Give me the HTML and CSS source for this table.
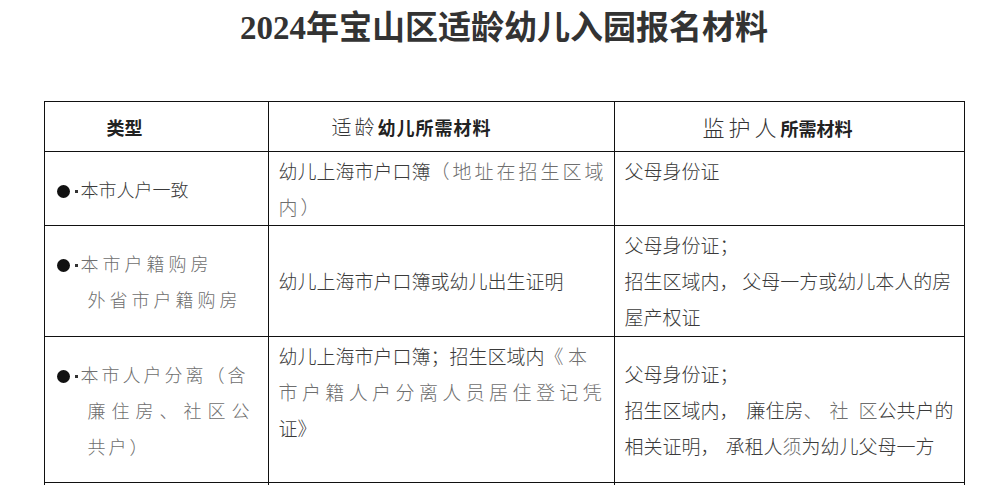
FILE: index.html
```html
<!DOCTYPE html>
<html lang="zh-CN">
<head>
<meta charset="utf-8">
<title>2024年宝山区适龄幼儿入园报名材料</title>
<link rel="stylesheet" href="styles.css">
</head>
<body>
<h1 class="title">2024年宝山区适龄幼儿入园报名材料</h1>
<table class="grid">
  <colgroup>
    <col class="c1">
    <col class="c2">
    <col class="c3">
  </colgroup>
  <thead>
    <tr class="rh">
      <th class="h1">类型</th>
      <th class="h2"><span class="big20">适龄</span>幼儿所需材料</th>
      <th class="h3"><span class="big22">监护人</span>所需材料</th>
    </tr>
  </thead>
  <tbody>
    <tr class="r1">
      <td class="kind"><div class="item"><span class="dot"></span><span class="mid"></span>本市人户一致</div></td>
      <td class="top">幼儿上海市户口簿<span class="lt ls3">（地址在招生区域<br>内）</span></td>
      <td class="top">父母身份证</td>
    </tr>
    <tr class="r2">
      <td class="kind"><div class="item"><span class="dot"></span><span class="mid"></span><span class="lt ls4">本市户籍购房<br>外省市户籍购房</span></div></td>
      <td>幼儿上海市户口簿或幼儿出生证明</td>
      <td>父母身份证；<br>招生区域内，&thinsp;父母一方或幼儿本人的房<br>屋产权证</td>
    </tr>
    <tr class="r3">
      <td class="kind"><div class="item"><span class="dot"></span><span class="mid"></span><span class="lt ls3">本市人户分离（含</span><br><span class="lt ls6">廉住房、社区公</span><br><span class="lt ls3">共户）</span></div></td>
      <td class="top">幼儿上海市户口簿；招生区域内<span class="lt ls4w">《本<br>市户籍人户分离人员居住登记凭</span><br>证》</td>
      <td>父母身份证；<br>招生区域内<span class="gap">，</span>廉住房<span class="lt pause">、</span><span class="lt ls10">社</span><span class="lt">区</span>公共户的<br>相关证明<span class="gap-s">，</span>承租人<span class="lt">须</span>为幼儿父母一方</td>
    </tr>
    <tr class="r4">
      <td class="kind"></td>
      <td class="top"></td>
      <td></td>
    </tr>
  </tbody>
</table>
</body>
</html>
```

FILE: styles.css
```css
html, body {
  margin: 0;
  padding: 0;
  overflow: hidden;
  background: #ffffff;
}

body {
  font-family: "Noto Sans CJK SC", "Liberation Sans", sans-serif;
  color: #333333;
}

.title {
  margin: 0;
  padding-top: 8px;
  height: 40px;
  line-height: 40px;
  text-align: center;
  font-family: "Liberation Serif", "Noto Sans CJK SC", serif;
  font-size: 33px;
  font-weight: 700;
  color: #333333;
}

.grid {
  margin: 53px auto 0;
  width: 920px;
  border-collapse: collapse;
  table-layout: fixed;
}

.c1 { width: 224px; }
.c2 { width: 346px; }
.c3 { width: 350px; }

.grid th,
.grid td {
  border: 1px solid #111111;
  padding: 0 4px 0 10px;
  font-size: 19px;
  line-height: 36px;
  vertical-align: middle;
  text-align: left;
  color: #3a3a3a;
  font-weight: 300;
  white-space: nowrap;
}

.grid td.top {
  vertical-align: top;
  padding-top: 1px;
}

.rh { height: 50px; }
.r1 { height: 74px; }
.r2 { height: 111px; }
.r3 { height: 146px; }
.r4 { height: 60px; }

.grid th {
  font-size: 18px;
  font-weight: 700;
  color: #222222;
}

.grid th.h1 { padding-left: 62px; }
.grid th.h2 { padding-left: 63px; letter-spacing: 1px; }
.grid th.h3 { padding-left: 88px; }

.big20 {
  font-size: 20px;
  font-weight: 300;
  letter-spacing: 3px;
  color: #333333;
}

.big22 {
  font-size: 22px;
  font-weight: 300;
  letter-spacing: 4px;
  color: #333333;
}

.grid td.kind {
  padding-left: 12px;
  font-size: 18px;
}

.item {
  padding-left: 31px;
  text-indent: -31px;
}

.dot {
  display: inline-block;
  width: 13px;
  height: 13px;
  border-radius: 50%;
  background: #111111;
  vertical-align: -1px;
  text-indent: 0;
}

.mid {
  display: inline-block;
  width: 3px;
  height: 3px;
  background: #333333;
  margin: 0 3px 0 5px;
  vertical-align: 4px;
  text-indent: 0;
}

.lt {
  color: #6e6e6e;
  font-weight: 300;
}

.gap { margin-right: 8px; }
.gap-s { margin-right: 6px; }
.pause { margin-right: 7px; }

.ls3 { letter-spacing: 3px; }
.ls4 { letter-spacing: 4px; }
.ls4w { letter-spacing: 4.4px; }
.ls6 { letter-spacing: 6px; }
.ls10 { letter-spacing: 10px; }
```
